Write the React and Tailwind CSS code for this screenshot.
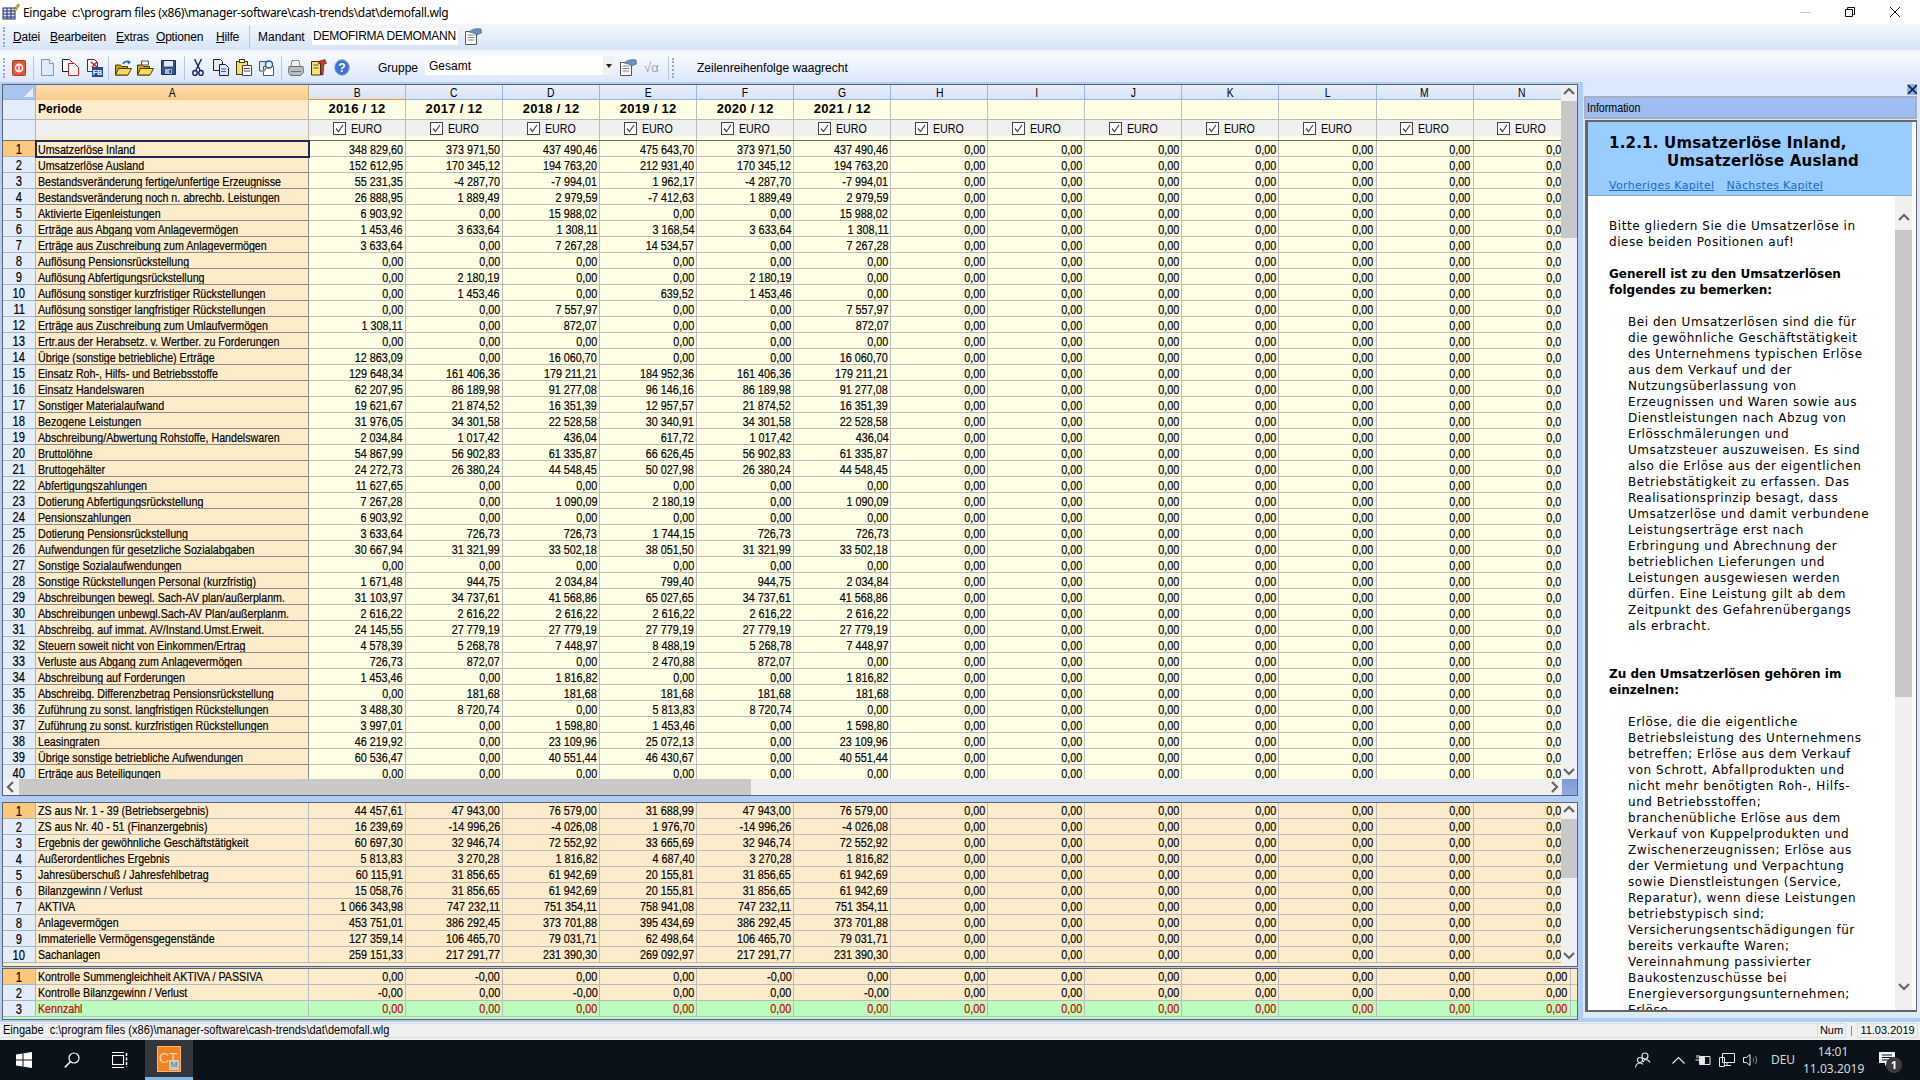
import React from 'react'

const SANS = "font-['Liberation_Sans',sans-serif]"
const VERDANA = "font-['DejaVu_Sans',sans-serif]"

const mainRows = [
  ['Umsatzerlöse Inland', '348 829,60', '373 971,50', '437 490,46', '475 643,70'],
  ['Umsatzerlöse Ausland', '152 612,95', '170 345,12', '194 763,20', '212 931,40'],
  ['Bestandsveränderung fertige/unfertige Erzeugnisse', '55 231,35', '-4 287,70', '-7 994,01', '1 962,17'],
  ['Bestandsveränderung noch n. abrechb. Leistungen', '26 888,95', '1 889,49', '2 979,59', '-7 412,63'],
  ['Aktivierte Eigenleistungen', '6 903,92', '0,00', '15 988,02', '0,00'],
  ['Erträge aus Abgang vom Anlagevermögen', '1 453,46', '3 633,64', '1 308,11', '3 168,54'],
  ['Erträge aus Zuschreibung zum Anlagevermögen', '3 633,64', '0,00', '7 267,28', '14 534,57'],
  ['Auflösung Pensionsrückstellung', '0,00', '0,00', '0,00', '0,00'],
  ['Auflösung Abfertigungsrückstellung', '0,00', '2 180,19', '0,00', '0,00'],
  ['Auflösung sonstiger kurzfristiger Rückstellungen', '0,00', '1 453,46', '0,00', '639,52'],
  ['Auflösung sonstiger langfristiger Rückstellungen', '0,00', '0,00', '7 557,97', '0,00'],
  ['Erträge aus Zuschreibung zum Umlaufvermögen', '1 308,11', '0,00', '872,07', '0,00'],
  ['Ertr.aus der Herabsetz. v. Wertber. zu Forderungen', '0,00', '0,00', '0,00', '0,00'],
  ['Übrige (sonstige betriebliche) Erträge', '12 863,09', '0,00', '16 060,70', '0,00'],
  ['Einsatz Roh-, Hilfs- und Betriebsstoffe', '129 648,34', '161 406,36', '179 211,21', '184 952,36'],
  ['Einsatz Handelswaren', '62 207,95', '86 189,98', '91 277,08', '96 146,16'],
  ['Sonstiger Materialaufwand', '19 621,67', '21 874,52', '16 351,39', '12 957,57'],
  ['Bezogene Leistungen', '31 976,05', '34 301,58', '22 528,58', '30 340,91'],
  ['Abschreibung/Abwertung Rohstoffe, Handelswaren', '2 034,84', '1 017,42', '436,04', '617,72'],
  ['Bruttolöhne', '54 867,99', '56 902,83', '61 335,87', '66 626,45'],
  ['Bruttogehälter', '24 272,73', '26 380,24', '44 548,45', '50 027,98'],
  ['Abfertigungszahlungen', '11 627,65', '0,00', '0,00', '0,00'],
  ['Dotierung Abfertigungsrückstellung', '7 267,28', '0,00', '1 090,09', '2 180,19'],
  ['Pensionszahlungen', '6 903,92', '0,00', '0,00', '0,00'],
  ['Dotierung Pensionsrückstellung', '3 633,64', '726,73', '726,73', '1 744,15'],
  ['Aufwendungen für gesetzliche Sozialabgaben', '30 667,94', '31 321,99', '33 502,18', '38 051,50'],
  ['Sonstige Sozialaufwendungen', '0,00', '0,00', '0,00', '0,00'],
  ['Sonstige Rückstellungen Personal (kurzfristig)', '1 671,48', '944,75', '2 034,84', '799,40'],
  ['Abschreibungen bewegl. Sach-AV plan/außerplanm.', '31 103,97', '34 737,61', '41 568,86', '65 027,65'],
  ['Abschreibungen unbewgl.Sach-AV Plan/außerplanm.', '2 616,22', '2 616,22', '2 616,22', '2 616,22'],
  ['Abschreibg. auf immat. AV/Instand.Umst.Erweit.', '24 145,55', '27 779,19', '27 779,19', '27 779,19'],
  ['Steuern soweit nicht von Einkommen/Ertrag', '4 578,39', '5 268,78', '7 448,97', '8 488,19'],
  ['Verluste aus Abgang zum Anlagevermögen', '726,73', '872,07', '0,00', '2 470,88'],
  ['Abschreibung auf Forderungen', '1 453,46', '0,00', '1 816,82', '0,00'],
  ['Abschreibg. Differenzbetrag Pensionsrückstellung', '0,00', '181,68', '181,68', '181,68'],
  ['Zuführung zu sonst. langfristigen Rückstellungen', '3 488,30', '8 720,74', '0,00', '5 813,83'],
  ['Zuführung zu sonst. kurzfristigen Rückstellungen', '3 997,01', '0,00', '1 598,80', '1 453,46'],
  ['Leasingraten', '46 219,92', '0,00', '23 109,96', '25 072,13'],
  ['Übrige sonstige betriebliche Aufwendungen', '60 536,47', '0,00', '40 551,44', '46 430,67'],
  ['Erträge aus Beteiligungen', '0,00', '0,00', '0,00', '0,00'],
]

const summaryRows = [
  ['ZS aus Nr. 1 - 39 (Betriebsergebnis)', '44 457,61', '47 943,00', '76 579,00', '31 688,99'],
  ['ZS aus Nr. 40 - 51 (Finanzergebnis)', '16 239,69', '-14 996,26', '-4 026,08', '1 976,70'],
  ['Ergebnis der gewöhnliche Geschäftstätigkeit', '60 697,30', '32 946,74', '72 552,92', '33 665,69'],
  ['Außerordentliches Ergebnis', '5 813,83', '3 270,28', '1 816,82', '4 687,40'],
  ['Jahresüberschuß / Jahresfehlbetrag', '60 115,91', '31 856,65', '61 942,69', '20 155,81'],
  ['Bilanzgewinn / Verlust', '15 058,76', '31 856,65', '61 942,69', '20 155,81'],
  ['AKTIVA', '1 066 343,98', '747 232,11', '751 354,11', '758 941,08'],
  ['Anlagevermögen', '453 751,01', '386 292,45', '373 701,88', '395 434,69'],
  ['Immaterielle Vermögensgegenstände', '127 359,14', '106 465,70', '79 031,71', '62 498,64'],
  ['Sachanlagen', '259 151,33', '217 291,77', '231 390,30', '269 092,97'],
]

const checkRows = [
  ['Kontrolle Summengleichheit AKTIVA / PASSIVA', '0,00', '-0,00', '0,00', '0,00'],
  ['Kontrolle Bilanzgewinn / Verlust', '-0,00', '0,00', '-0,00', '0,00'],
  ['Kennzahl', '0,00', '0,00', '0,00', '0,00'],
]

const letters = ['B', 'C', 'D', 'E', 'F', 'G', 'H', 'I', 'J', 'K', 'L', 'M', 'N']
const years = ['2016 / 12', '2017 / 12', '2018 / 12', '2019 / 12', '2020 / 12', '2021 / 12', '', '', '', '', '', '', '']

// F and G repeat C and D in the sheet, H to N are empty
const allValues = (row) => [row[1], row[2], row[3], row[4], row[2], row[3], '0,00', '0,00', '0,00', '0,00', '0,00', '0,00', '0,00']

// the sheet font is a condensed one, no narrow family is installed here
const LeftText = ({ children, className = 'scale-x-[0.82]' }) => (
  <span className={`inline-block origin-left whitespace-pre ${className}`}>{children}</span>
)
const RightText = ({ children }) => (
  <span className="inline-block origin-right whitespace-pre scale-x-[0.83]">{children}</span>
)
const MidText = ({ children }) => (
  <span className="inline-block origin-center whitespace-pre scale-x-[0.8]">{children}</span>
)

function Chevron({ dir }) {
  const paths = { up: 'M2 8l5-5 5 5', down: 'M2 4l5 5 5-5', left: 'M9 2L4 7l5 5', right: 'M5 2l5 5-5 5' }
  return (
    <svg width="14" height="14" viewBox="0 0 14 14" fill="none" stroke="#666" strokeWidth="2.2">
      <path d={paths[dir]} />
    </svg>
  )
}

function Check() {
  return (
    <span className="w-[13px] h-[13px] border border-[#444] bg-white flex items-center justify-center shrink-0">
      <svg width="11" height="11" viewBox="0 0 11 11" fill="none" stroke="#444" strokeWidth="1.2">
        <path d="M2 5.5l2.5 3L9 2" />
      </svg>
    </span>
  )
}

function HeaderRows() {
  return (
    <>
      <div className={`${SANS} flex h-[15px] shrink-0 text-[13px] leading-[16px]`}>
        <div className="w-[33px] shrink-0 bg-[#a9c4ee] border-r border-b border-[#9ab4dc] flex justify-end items-end p-[2px]">
          <svg width="9" height="9" viewBox="0 0 9 9"><path d="M9 0v9H0z" fill="#e8eef9" /></svg>
        </div>
        <div className="w-[273px] shrink-0 bg-linear-to-b from-[#fce0ae] to-[#f9c98a] border-r border-[#c9a878] text-center"><MidText>A</MidText></div>
        {letters.map((l, i) => (
          <div
            key={l}
            className={`w-[97.06px] shrink-0 bg-linear-to-b from-[#e8eff9] to-[#d7e3f6] border-r border-[#9db6dc] border-b text-center ${i === 0 ? 'border-b-[#f0932b]' : 'border-b-[#9db6dc]'}`}
          >
            <MidText>{l}</MidText>
          </div>
        ))}
      </div>
      <div className="flex h-[20px] shrink-0">
        <div className="w-[33px] shrink-0 bg-[#e3ecf9] border-r border-b border-[#a8b4c8]" />
        <div className={`${SANS} w-[273px] shrink-0 bg-[#fdeccb] border-r border-b border-[#b9b9b0] pl-[2px] text-[12px] font-bold leading-[18px]`}>Periode</div>
        {years.map((y, i) => (
          <div key={i} className={`${SANS} w-[97.06px] shrink-0 bg-[#ffffe6] border-r border-b border-[#bcbcbc] text-center text-[13px] font-bold leading-[18px] tracking-[0.3px]`}>{y}</div>
        ))}
      </div>
      <div className="flex h-[16px] shrink-0">
        <div className="w-[33px] shrink-0 bg-[#e3ecf9] border-r border-[#a8b4c8]" />
        <div className="w-[273px] shrink-0 bg-[#f0f0f0] border-r border-[#b9b9b0]" />
        {letters.map((l) => (
          <div key={l} className={`${SANS} w-[97.06px] shrink-0 bg-[#f0f0f0] border-r border-[#bcbcbc] flex items-center justify-center gap-[5px] text-[13px] leading-[15px]`}>
            <Check />
            <span className="w-[31px]"><LeftText>EURO</LeftText></span>
          </div>
        ))}
      </div>
      <div className="flex h-[5px] shrink-0 border-b border-[#6f6f68]">
        <div className="w-[33px] shrink-0 bg-[#e3ecf9] border-r border-[#a8b4c8]" />
        <div className="w-[273px] shrink-0 bg-[#fdeccb] border-r border-b-0 border-[#b9b9b0]" />
        {letters.map((l) => (
          <div key={l} className="w-[97.06px] shrink-0 bg-[#ffffe6] border-r border-[#bcbcbc]" />
        ))}
      </div>
    </>
  )
}

function SheetRow({ n, row, labelBg, valueBg, labelLine, active, selected, red, tight }) {
  const tone = red ? 'text-[#cc0000]' : 'text-black'
  return (
    <div className={`${SANS} flex h-[16px] shrink-0 text-[13px] [-webkit-text-stroke:0.2px] ${tight ? 'leading-[16px]' : 'leading-[17px]'}`}>
      <div className={`w-[33px] shrink-0 border-r border-b border-[#a8b4c8] text-center text-[14px] ${active ? 'bg-[#fbc97d]' : 'bg-[#e3ecf9]'}`}>
        <MidText>{n}</MidText>
      </div>
      <div className={`w-[273px] shrink-0 border-r border-b pl-[2px] whitespace-nowrap overflow-hidden ${labelBg} ${labelLine} ${tone} ${selected ? 'outline-2 -outline-offset-1 outline-[#1d2b52] relative z-10' : ''}`}>
        <LeftText>{row[0]}</LeftText>
      </div>
      {allValues(row).map((v, i) => (
        <div key={i} className={`w-[97.06px] shrink-0 border-r border-b border-[#bcbcbc] pr-[2px] text-right whitespace-nowrap ${valueBg} ${tone}`}>
          <RightText>{v}</RightText>
        </div>
      ))}
    </div>
  )
}

function VScroll({ thumbTop, thumbHeight, downGap }) {
  return (
    <div className="w-[16px] shrink-0 bg-[#f0f0f0] flex flex-col items-center">
      <div className={`flex items-center justify-center shrink-0 ${thumbTop}`}><Chevron dir="up" /></div>
      <div className={`w-full bg-[#c8c8c8] shrink-0 ${thumbHeight}`} />
      <div className="flex-1" />
      <div className={`flex items-center justify-center shrink-0 ${downGap}`}><Chevron dir="down" /></div>
    </div>
  )
}

function MainSheet() {
  return (
    <div className="h-[712px] shrink-0 border border-[#5f6368] flex flex-col">
      <div className="h-[694px] flex shrink-0">
        <div className="flex-1 overflow-hidden flex flex-col bg-[#ffffe6]">
          <HeaderRows />
          {mainRows.map((row, i) => (
            <SheetRow key={i} n={i + 1} row={row} labelBg="bg-[#fdeccb]" valueBg="bg-[#ffffe6]" labelLine="border-[#8c8c82]" active={i === 0} selected={i === 0} />
          ))}
        </div>
        <VScroll thumbTop="h-[16px]" thumbHeight="h-[137px]" downGap="h-[14px]" />
      </div>
      <div className="h-[16px] flex shrink-0 bg-[#f0f0f0]">
        <div className="w-[16px] shrink-0 flex items-center justify-center"><Chevron dir="left" /></div>
        <div className="w-[732px] shrink-0 bg-[#c8c8c8]" />
        <div className="flex-1 flex items-center justify-end pr-[1px]"><Chevron dir="right" /></div>
        <div className="w-[15px] shrink-0 bg-linear-to-b from-[#7f9ad3] to-[#91ace0]" />
      </div>
    </div>
  )
}

function SummarySheet() {
  return (
    <div className="h-[165px] shrink-0 border border-[#5f6368] flex">
      <div className="flex-1 overflow-hidden flex flex-col bg-[#fdeccb]">
        {summaryRows.map((row, i) => (
          <SheetRow key={i} tight n={i + 1} row={row} labelBg="bg-[#fdeccb]" valueBg="bg-[#fdeccb]" labelLine="border-[#b8bcc4]" active={i === 0} />
        ))}
      </div>
      <VScroll thumbTop="h-[16px]" thumbHeight="h-[59px]" downGap="h-[20px]" />
    </div>
  )
}

function CheckSheet() {
  return (
    <div className="h-[52px] shrink-0 border border-[#5f6368] flex flex-col overflow-hidden bg-[#bcfcbe]">
      {checkRows.map((row, i) => (
        <div key={i} className="flex">
          <div className="overflow-hidden">
            <SheetRow
              tight
              n={i + 1}
              row={row}
              labelBg={i === 2 ? 'bg-[#bcfcbe]' : 'bg-[#fdeccb]'}
              valueBg={i === 2 ? 'bg-[#bcfcbe]' : 'bg-[#fdeccb]'}
              labelLine="border-[#b8bcc4]"
              active={i === 0}
              red={i === 2}
            />
          </div>
          <div className={`flex-1 border-b border-[#bcbcbc] ${i === 2 ? 'bg-[#bcfcbe]' : 'bg-[#fdeccb]'}`} />
        </div>
      ))}
    </div>
  )
}

/* ---------- toolbar icons ---------- */
const StopIcon = () => (
  <svg width="14" height="16" viewBox="0 0 14 16"><rect x=".5" y=".5" width="13" height="15" rx="1" fill="#e4573d" stroke="#b13a25" /><circle cx="7" cy="8" r="3.6" fill="none" stroke="#fff" strokeWidth="1.6" /><rect x="6.3" y="5" width="1.4" height="6" fill="#fff" /></svg>
)
const PageIcon = () => (
  <svg width="13" height="17" viewBox="0 0 13 17"><path d="M.5.5h8l4 4v12H.5z" fill="#dfeafb" stroke="#7d97bf" /><path d="M8.5.5v4h4" fill="#fff" stroke="#7d97bf" /></svg>
)
const DoublePageIcon = () => (
  <svg width="17" height="17" viewBox="0 0 17 17"><path d="M.5.5h7l3 3v9H.5z" fill="#fff" stroke="#222" /><path d="M6.5 4.5h6l4 4v8h-10z" fill="#fff" stroke="#d01f1f" /></svg>
)
const FbIcon = () => (
  <svg width="16" height="18" viewBox="0 0 16 18"><path d="M.5.5h7l3 3v9H.5z" fill="#fff" stroke="#334" /><path d="M4 3l6 5M10 3L5 8" stroke="#d62020" strokeWidth="1.6" /><rect x="5" y="8" width="11" height="10" fill="#1b4aa8" /><text x="5.8" y="16" fontSize="7" fontWeight="700" fontFamily="Liberation Sans" fill="#fff">FB</text></svg>
)
const OpenFolderIcon = () => (
  <svg width="17" height="16" viewBox="0 0 17 16"><path d="M.5 5h5l1 1.5h6V15H.5z" fill="#caa016" stroke="#4a3a08" /><path d="M.5 15l3-6.5h13L13 15z" fill="#f6dc55" stroke="#4a3a08" /><path d="M8 4c1-2.500 3.500-3 6-2" fill="none" stroke="#2b62c4" strokeWidth="1.500" /><path d="M12.500 0l3.500 2-3 2.500z" fill="#2b62c4" /></svg>
)
const FolderIcon = () => (
  <svg width="17" height="16" viewBox="0 0 17 16"><path d="M4.500 1h7v4h-7z" fill="#fff" stroke="#555" /><path d="M.5 5h5l1 1.500h6V15H.5z" fill="#caa016" stroke="#4a3a08" /><path d="M.5 15l3-6.500h13L13 15z" fill="#f6dc55" stroke="#4a3a08" /></svg>
)
const SaveIcon = () => (
  <svg width="15" height="15" viewBox="0 0 15 15"><path d="M.5.5h14v14H.5z" fill="#34508f" stroke="#1d2d57" /><rect x="3" y="1" width="9" height="5.500" fill="#dfe7f5" /><rect x="4" y="9" width="7" height="5" fill="#aab8d4" /><rect x="8.500" y="10" width="1.500" height="3" fill="#1d2d57" /></svg>
)
const ScissorsIcon = () => (
  <svg width="12" height="17" viewBox="0 0 12 17" fill="none" stroke="#16246b" strokeWidth="1.400"><path d="M2.500 0l5.500 11M9.500 0L4 11" /><ellipse cx="3" cy="14" rx="2.200" ry="2.500" /><ellipse cx="9" cy="14" rx="2.200" ry="2.500" /></svg>
)
const CopyIcon = () => (
  <svg width="16" height="17" viewBox="0 0 16 17"><path d="M.5.5h7l2 2v9H.5z" fill="#e9e9e9" stroke="#222" /><path d="M6.500 5.500h6l3 3v8h-9z" fill="#dbe7fb" stroke="#222" /><path d="M8 10h5M8 12.500h5" stroke="#2b62c4" /></svg>
)
const PasteIcon = () => (
  <svg width="16" height="17" viewBox="0 0 16 17"><rect x=".5" y="2.500" width="11" height="13" fill="#f5dc62" stroke="#3c3a20" /><rect x="3.500" y=".5" width="5" height="3" fill="#fff" stroke="#3c3a20" /><path d="M6.500 6.500h9v10h-9z" fill="#fff" stroke="#445" /><path d="M8 9.500h6M8 12h6" stroke="#445" /></svg>
)
const FindIcon = () => (
  <svg width="16" height="17" viewBox="0 0 16 17"><path d="M.5 2.500h8l2 2V12H.5z" fill="#dbe7fb" stroke="#2b5aa8" /><path d="M4.500 7.500h10v9h-10z" fill="#fff" stroke="#2b5aa8" /><circle cx="10" cy="5.500" r="3.500" fill="#eaf3ff" stroke="#1c4e9e" strokeWidth="1.300" /><path d="M7.500 8.500L4 13" stroke="#b88a32" strokeWidth="2" /></svg>
)
const PrinterIcon = () => (
  <svg width="16" height="17" viewBox="0 0 16 17"><path d="M4 1.500h7l1 6H3z" fill="#f2f2f2" stroke="#888" /><path d="M1 7.500h14l.5 6-3 3h-10l-2-3z" fill="#b9bcc1" stroke="#6a6d72" /><path d="M3 12.500h10" stroke="#6a6d72" /></svg>
)
const ToolsIcon = () => (
  <svg width="16" height="17" viewBox="0 0 16 17"><path d="M.5 2.500h9V16H.5z" fill="#f8e46a" stroke="#333" /><path d="M2.500 6h5M2.500 9h5" stroke="#555" /><path d="M7 2.500l7-2 1.500 4-2.500.5-1 11h-2l.5-11-3-.5z" fill="#c8392b" stroke="#5b1d14" strokeWidth=".6" /></svg>
)
const HelpIcon = () => (
  <svg width="16" height="17" viewBox="0 0 16 17"><ellipse cx="8" cy="8.500" rx="7.400" ry="7.900" fill="#3f72d2" stroke="#aab9d6" /><text x="8" y="13" textAnchor="middle" fontSize="12" fontWeight="700" fontFamily="Liberation Sans" fill="#fff">?</text></svg>
)
const SheetHandIcon = () => (
  <svg width="17" height="17" viewBox="0 0 17 17"><path d="M.5 3.500h11v13H.5z" fill="#fff" stroke="#555" /><path d="M2.500 7h7M2.500 9.500h7M2.500 12h7" stroke="#888" /><path d="M4 4c3-3 8-4 12-3l.5 4-5 2-3-2z" fill="#6f8fb8" stroke="#3e5578" strokeWidth=".6" /></svg>
)

const Sep = ({ className }) => <div className={`w-px h-[24px] bg-[#b9c7db] shrink-0 ${className}`} />
const Grip = () => <div className="ml-[3px] w-[3px] h-[20px] border-l-2 border-dotted border-[#9aa8bc] shrink-0" />

function TitleBar() {
  return (
    <div className="h-[24px] bg-white flex items-center shrink-0 font-['Noto_Sans',sans-serif] text-[12px] text-black">
      <svg className="ml-[2px] shrink-0" width="18" height="18" viewBox="0 0 18 18">
        <rect x="1" y="5" width="12" height="11" fill="#dfe6f2" stroke="#1c2f6b" />
        <path d="M1 8h12M1 11h12M1 14h12M5 5v11M9 5v11" stroke="#1c2f6b" />
        <path d="M11 8L16 1l1.500 1L13 9z" fill="#e8b62c" stroke="#5a4510" strokeWidth=".6" />
      </svg>
      <span className="ml-[3px] whitespace-pre tracking-[-0.32px] pt-[1px]">{'Eingabe  c:\\program files (x86)\\manager-software\\cash-trends\\dat\\demofall.wlg'}</span>
      <div className="flex-1" />
      <div className="w-[10px] h-px bg-[#c4c4c4] mr-[35px]" />
      <svg className="mr-[35px]" width="10" height="10" viewBox="0 0 10 10" fill="none" stroke="#111"><path d="M.5 2.500h7v7h-7zM2.500 2.500v-2h7v7h-2" /></svg>
      <svg className="mr-[20px]" width="10" height="10" viewBox="0 0 10 10" stroke="#111"><path d="M0 0l10 10M10 0L0 10" /></svg>
    </div>
  )
}

function MenuBar() {
  const item = (first, rest, width) => (
    <span key={first + rest} className={`block whitespace-nowrap ${width}`}><span className="underline">{first}</span>{rest}</span>
  )
  return (
    <div className="h-[29px] shrink-0 bg-[#f1f5fb] pb-[3px]">
      <div className={`${SANS} h-[26px] bg-linear-to-b from-[#f4f7fc] to-[#d7e4f7] flex items-center text-[12px] text-black`}>
        <Grip />
        <div className="ml-[7px] flex gap-[10px] tracking-[-0.2px] w-[228px] shrink-0">
          {item('D', 'atei', 'w-[27px]')}
          {item('B', 'earbeiten', 'w-[56px]')}
          {item('E', 'xtras', 'w-[30px]')}
          {item('O', 'ptionen', 'w-[50px]')}
          {item('H', 'ilfe', 'w-[25px]')}
        </div>
        <Sep className="ml-[8px]" />
        <span className="ml-[8px] w-[47px] shrink-0">Mandant</span>
        <div className="ml-[7px] w-[146px] h-[17px] bg-white -mt-[2px] leading-[16px] pl-[1px] whitespace-nowrap tracking-[-0.25px] shrink-0">DEMOFIRMA DEMOMANN</div>
        <div className="ml-[7px] -mt-[2px]"><SheetHandIcon /></div>
      </div>
    </div>
  )
}

function ToolBar() {
  return (
    <div className={`${SANS} h-[29px] shrink-0 bg-linear-to-b from-[#f9fbfe] to-[#dbe7fa] flex items-center text-[12px] text-black`}>
      <Grip />
      <div className="ml-[6px]"><StopIcon /></div>
      <Sep className="ml-[7px]" />
      <div className="ml-[7px]"><PageIcon /></div>
      <div className="ml-[8px]"><DoublePageIcon /></div>
      <div className="ml-[8px]"><FbIcon /></div>
      <Sep className="ml-[5px]" />
      <div className="ml-[6px]"><OpenFolderIcon /></div>
      <div className="ml-[5px]"><FolderIcon /></div>
      <div className="ml-[7px]"><SaveIcon /></div>
      <Sep className="ml-[8px]" />
      <div className="ml-[7px]"><ScissorsIcon /></div>
      <div className="ml-[9px]"><CopyIcon /></div>
      <div className="ml-[7px]"><PasteIcon /></div>
      <div className="ml-[7px]"><FindIcon /></div>
      <Sep className="ml-[6px]" />
      <div className="ml-[6px]"><PrinterIcon /></div>
      <div className="ml-[7px]"><ToolsIcon /></div>
      <div className="ml-[7px]"><HelpIcon /></div>
      <span className="ml-[28px] w-[40px] shrink-0">Gruppe</span>
      <div className="ml-[7px] w-[189px] h-[19px] -mt-[4px] bg-white pl-[4px] flex items-center justify-between shrink-0">
        <span>Gesamt</span>
        <span className="w-[11px] h-full bg-[#f0f0f0] flex items-center justify-center">
          <svg width="6" height="4" viewBox="0 0 6 4"><path d="M0 0h6L3 4z" fill="#222" /></svg>
        </span>
      </div>
      <div className="ml-[6px]"><SheetHandIcon /></div>
      <span className="ml-[7px] w-[17px] shrink-0 text-[13px] text-[#9aa3ad] leading-none">√α</span>
      <Sep className="ml-[7px]" />
      <Grip />
      <span className="ml-[22px]">Zeilenreihenfolge waagrecht</span>
    </div>
  )
}

/* ---------- information panel ---------- */
const introLines = ['Bitte gliedern Sie die Umsatzerlöse in', 'diese beiden Positionen auf!']
const headLines1 = ['Generell ist zu den Umsatzerlösen', 'folgendes zu bemerken:']
const bodyLines1 = [
  'Bei den Umsatzerlösen sind die für',
  'die gewöhnliche Geschäftstätigkeit',
  'des Unternehmens typischen Erlöse',
  'aus dem Verkauf und der',
  'Nutzungsüberlassung von',
  'Erzeugnissen und Waren sowie aus',
  'Dienstleistungen nach Abzug von',
  'Erlösschmälerungen und',
  'Umsatzsteuer auszuweisen. Es sind',
  'also die Erlöse aus der eigentlichen',
  'Betriebstätigkeit zu erfassen. Das',
  'Realisationsprinzip besagt, dass',
  'Umsatzerlöse und damit verbundene',
  'Leistungserträge erst nach',
  'Erbringung und Abrechnung der',
  'betrieblichen Lieferungen und',
  'Leistungen ausgewiesen werden',
  'dürfen. Eine Leistung gilt ab dem',
  'Zeitpunkt des Gefahrenübergangs',
  'als erbracht.',
]
const headLines2 = ['Zu den Umsatzerlösen gehören im', 'einzelnen:']
const bodyLines2 = [
  'Erlöse, die die eigentliche',
  'Betriebsleistung des Unternehmens',
  'betreffen; Erlöse aus dem Verkauf',
  'von Schrott, Abfallprodukten und',
  'nicht mehr benötigten Roh-, Hilfs-',
  'und Betriebsstoffen;',
  'branchenübliche Erlöse aus dem',
  'Verkauf von Kuppelprodukten und',
  'Zwischenerzeugnissen; Erlöse aus',
  'der Vermietung und Verpachtung',
  'sowie Dienstleistungen (Service,',
  'Reparatur), wenn diese Leistungen',
  'betriebstypisch sind;',
  'Versicherungsentschädigungen für',
  'bereits verkaufte Waren;',
  'Vereinnahmung passivierter',
  'Baukostenzuschüsse bei',
  'Energieversorgungsunternehmen;',
  'Erlöse',
]

const Lines = ({ lines, className }) => (
  <div className={className}>
    {lines.map((l, i) => <div key={i} className="h-[16px] whitespace-nowrap">{l}</div>)}
  </div>
)

function InfoPanel() {
  return (
    <div className="w-[342px] shrink-0 pl-[5px] pb-[4px] flex">
      <div className="flex-1 bg-[#dce9fd] flex flex-col pb-[6px] pr-[3px] min-w-0">
        <div className="h-[14px] shrink-0 flex justify-end items-start pt-[2px]">
          <div className="w-[10px] h-[11px] bg-[#8fb0e6] flex items-center justify-center">
            <svg width="9" height="9" viewBox="0 0 9 9" stroke="#10204a" strokeWidth="1.600"><path d="M0 0l9 9M9 0L0 9" /></svg>
          </div>
        </div>
        <div className={`${SANS} h-[23px] shrink-0 ml-[1px] border-2 border-[#a8b0c0] bg-[#9fbcf3] text-[13px] leading-[19px] pl-[1px]`}>
          <LeftText>Information</LeftText>
        </div>
        <div className={`${VERDANA} flex-1 min-h-0 ml-[2px] mt-[1px] border-l-[3px] border-t-2 border-b-2 border-r border-[#666] bg-white flex flex-col text-black`}>
          <div className="h-[74px] shrink-0 bg-[#99ccff] border-b border-[#8fa6bc] mr-[4px] pl-[21px] pt-[12px] text-[15px] leading-[18px] font-bold tracking-[0.2px]">
            <div>1.2.1. Umsatzerlöse Inland,</div>
            <div className="pl-[58px]">Umsatzerlöse Ausland</div>
            <div className="mt-[8px] flex gap-[12px] text-[11px] leading-[16px] font-normal text-[#1a66d6] underline tracking-[0.3px]">
              <span>Vorheriges Kapitel</span>
              <span>Nächstes Kapitel</span>
            </div>
          </div>
          <div className="flex-1 min-h-0 flex mr-[4px] overflow-hidden">
            <div className="flex-1 overflow-hidden pl-[21px] pt-[22px] text-[12px] leading-[16px] tracking-[0.55px]">
              <Lines lines={introLines} />
              <Lines lines={headLines1} className="mt-[16px] font-bold tracking-normal" />
              <Lines lines={bodyLines1} className="mt-[16px] pl-[19px]" />
              <Lines lines={headLines2} className="mt-[32px] font-bold tracking-normal" />
              <Lines lines={bodyLines2} className="mt-[16px] pl-[19px]" />
            </div>
            <div className="w-[17px] shrink-0 bg-[#f0f0f0] flex flex-col">
              <div className="h-[34px] shrink-0 flex items-end justify-center pb-[4px]"><Chevron dir="up" /></div>
              <div className="h-[467px] shrink-0 bg-[#c8c8c8]" />
              <div className="flex-1" />
              <div className="h-[30px] shrink-0 flex items-start justify-center"><Chevron dir="down" /></div>
            </div>
          </div>
        </div>
      </div>
    </div>
  )
}

function StatusBar() {
  return (
    <div className="h-[18px] shrink-0 bg-[#f0f0f0] flex text-[12px] text-black">
      <div className={`${SANS} flex-1 h-[15px] mt-px border-y border-[#dcdcdc] pl-[3px] text-[13px] leading-[12px] overflow-hidden`}>
        <LeftText className="scale-x-[0.85]">{'Eingabe  c:\\program files (x86)\\manager-software\\cash-trends\\dat\\demofall.wlg'}</LeftText>
      </div>
      <div className={`${SANS} flex items-start mt-px pr-[2px] text-[11px] leading-[13px]`}>
        <div className="w-[29px] h-[15px] border border-[#dcdcdc] text-center">Num</div>
        <div className="w-px h-[10px] bg-[#6a8ccc] mx-[5px] mt-[3px]" />
        <div className="w-[61px] h-[15px] border border-[#dcdcdc] text-center">11.03.2019</div>
      </div>
    </div>
  )
}

function TaskBar() {
  return (
    <div className="h-[40px] shrink-0 bg-[#0c1219] flex items-center font-['Noto_Sans',sans-serif] text-[#d9d9d9]">
      <svg className="ml-[16px]" width="16" height="16" viewBox="0 0 16 16" fill="#fff"><path d="M0 2.500l6.500-1V7.500H0zM7.500 1.300L16 0v7.500H7.500zM0 8.500h6.500v6L0 13.500zM7.500 8.500H16V16l-8.500-1.300z" /></svg>
      <svg className="ml-[32px]" width="16" height="16" viewBox="0 0 16 16" fill="none" stroke="#fff" strokeWidth="1.200"><circle cx="10" cy="6" r="5" /><path d="M6.500 9.500L.8 15.500" strokeWidth="1.500" /></svg>
      <svg className="ml-[32px]" width="16" height="16" viewBox="0 0 16 16" fill="none" stroke="#fff" strokeWidth="1.100"><path d="M0 .5h12M0 15.500h12" /><rect x=".5" y="3.500" width="11" height="9" /><path d="M14.500 1v14" strokeDasharray="3 1.500" strokeWidth="1.500" /></svg>
      <div className="ml-[17px] w-[48px] h-[40px] bg-[#33363a] border-b-[3px] border-[#76b9ed] flex items-center justify-center">
        <div className={`${SANS} relative w-[24px] h-[26px] bg-[#f4811f] border border-[#ffb46b] text-[14px] text-[#ffd9a8] leading-[22px] pl-[1px]`}>
          CT
          <div className="absolute right-[1px] bottom-[1px] w-[10px] h-[10px] bg-[#c9c9c9] text-[8px] leading-[10px] text-[#666] text-center">M</div>
        </div>
      </div>
      <div className="flex-1" />
      <svg className="mr-[21px]" width="16" height="16" viewBox="0 0 16 16" fill="none" stroke="#e8e8e8" strokeWidth="1.100"><circle cx="10" cy="4" r="3" /><circle cx="5" cy="8" r="2.500" /><path d="M.5 15.500c.5-3.500 2-4.500 4.500-4.500 1.500 0 2.500.5 3 1.500M8 10c1-1 1.500-2.500 2-2.500 2 0 4 1 5 3" /></svg>
      <svg className="mr-[10px]" width="13" height="8" viewBox="0 0 13 8" fill="none" stroke="#e8e8e8" strokeWidth="1.200"><path d="M.5 7.500l6-6 6 6" /></svg>
      <svg className="mr-[8px]" width="16" height="12" viewBox="0 0 16 12" fill="none" stroke="#e8e8e8"><path d="M4.500 2.500h10.500v8H4.500z" /><path d="M5.500 3.500h4v6h-4z" fill="#e8e8e8" /><path d="M.5 6h4M2 1v3M4 1v3" /></svg>
      <svg className="mr-[8px]" width="16" height="14" viewBox="0 0 16 14" fill="none" stroke="#e8e8e8"><path d="M3.500.5h12v9h-12zM.5 4.500h5v9h-5zM8 9.500v3M6 12.500h6" /></svg>
      <svg className="mr-[11px]" width="16" height="14" viewBox="0 0 16 14" fill="none" stroke="#e8e8e8"><path d="M.5 4.500h3L7 1.500v11l-3.500-3h-3z" /><path d="M10 4.500c1 1.500 1 3.500 0 5M12.500 3c1.500 2.500 1.500 5.500 0 8" stroke="#8a8a8a" /></svg>
      <span className="text-[12px] w-[26px] text-center">DEU</span>
      <div className="ml-[7px] w-[60px] text-center text-[12px] leading-[17px]">
        <div>14:01</div>
        <div>11.03.2019</div>
      </div>
      <div className="relative ml-[16px] mr-[25px] w-[16px] h-[16px]">
        <svg width="16" height="15" viewBox="0 0 16 15" fill="#f2f2f2"><path d="M0 0h16v11H9l-3 3v-3H0z" /><path d="M3 3h10M3 5.500h10M3 8h10" stroke="#0c1219" /></svg>
        <div className="absolute -right-[7px] -bottom-[5px] w-[16px] h-[16px] rounded-full bg-[#3d3d3d] text-[11px] leading-[16px] text-center text-white font-bold">1</div>
      </div>
    </div>
  )
}

export default function App() {
  return (
    <div className="w-[1920px] h-[1080px] flex flex-col overflow-hidden bg-[#f0f0f0]">
      <TitleBar />
      <MenuBar />
      <ToolBar />
      <div className="h-[940px] shrink-0 flex bg-[#b0ccf8]">
        <div className="w-[1578px] shrink-0 pl-[2px] pt-[2px] flex flex-col">
          <MainSheet />
          <div className="h-[6px] shrink-0" />
          <SummarySheet />
          <div className="h-px shrink-0" />
          <CheckSheet />
        </div>
        <InfoPanel />
      </div>
      <StatusBar />
      <TaskBar />
    </div>
  )
}
